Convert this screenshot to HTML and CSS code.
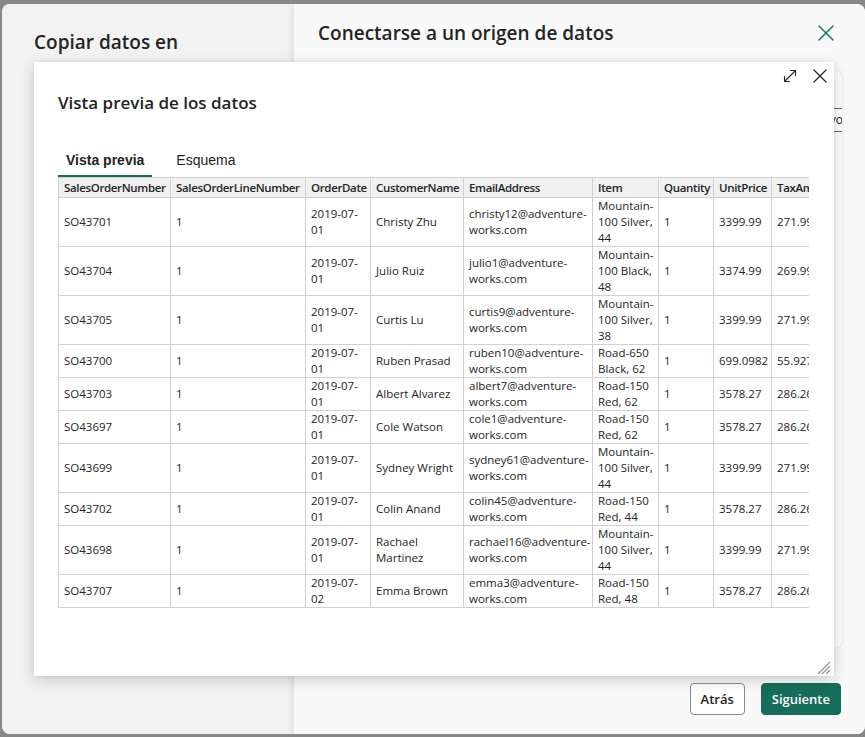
FILE: index.html
```html
<!DOCTYPE html>
<html lang="es">
<head>
<meta charset="utf-8">
<title>Vista previa de los datos</title>
<link rel="stylesheet" href="styles.css">
</head>
<body>
<div class="window">
  <aside class="left">
    <h1 class="left-title">Copiar datos en lakehouse</h1>
  </aside>
  <main class="right">
    <header class="right-head">
      <h2 class="right-title">Conectarse a un origen de datos</h2>
      <button class="icon-btn close-main" aria-label="Cerrar">
        <svg width="16" height="16" viewBox="0 0 16 16"><path d="M1 1 L15 15 M15 1 L1 15" stroke="currentColor" stroke-width="1.5" fill="none" stroke-linecap="round"/></svg>
      </button>
    </header>
    <section class="card">
      <div class="card-row"><span>Nombre del archivo</span></div>
    </section>
    <footer class="right-foot">
      <button class="btn">Atrás</button>
      <button class="btn primary">Siguiente</button>
    </footer>
  </main>
</div>

<div class="dialog" role="dialog">
  <div class="dialog-bar">
    <button class="icon-btn" aria-label="Expandir">
      <svg width="14" height="14" viewBox="0 0 14 14"><path d="M1.5 12.5 L12.5 1.5 M7.5 1.5 H12.5 V6.5 M1.5 7.5 V12.5 H6.5" stroke="#242424" stroke-width="1.1" fill="none" stroke-linecap="round" stroke-linejoin="round"/></svg>
    </button>
    <button class="icon-btn" aria-label="Cerrar">
      <svg width="14" height="14" viewBox="0 0 14 14"><path d="M1 1 L13 13 M13 1 L1 13" stroke="#242424" stroke-width="1.2" fill="none" stroke-linecap="round"/></svg>
    </button>
  </div>
  <h3 class="dialog-title">Vista previa de los datos</h3>
  <div class="tabs">
    <span class="tab active">Vista previa</span>
    <span class="tab">Esquema</span>
  </div>
  <div class="table-wrap">
    <table class="grid">
      <colgroup>
        <col class="c1"><col class="c2"><col class="c3"><col class="c4"><col class="c5"><col class="c6"><col class="c7"><col class="c8"><col class="c9"><col class="c10">
      </colgroup>
      <thead>
        <tr><th>SalesOrderNumber</th><th>SalesOrderLineNumber</th><th>OrderDate</th><th>CustomerName</th><th>EmailAddress</th><th>Item</th><th>Quantity</th><th>UnitPrice</th><th>TaxAmount</th><th>TotalAmount</th></tr>
      </thead>
      <tbody>
        <tr><td>SO43701</td><td>1</td><td>2019-07-<wbr>01</td><td>Christy Zhu</td><td>christy12@adventure-<wbr>works.com</td><td>Mountain-<wbr>100 Silver, 44</td><td>1</td><td>3399.99</td><td>271.99</td><td>3671.98</td></tr>
        <tr><td>SO43704</td><td>1</td><td>2019-07-<wbr>01</td><td>Julio Ruiz</td><td>julio1@adventure-<wbr>works.com</td><td>Mountain-<wbr>100 Black, 48</td><td>1</td><td>3374.99</td><td>269.99</td><td>3644.98</td></tr>
        <tr><td>SO43705</td><td>1</td><td>2019-07-<wbr>01</td><td>Curtis Lu</td><td>curtis9@adventure-<wbr>works.com</td><td>Mountain-<wbr>100 Silver, 38</td><td>1</td><td>3399.99</td><td>271.99</td><td>3671.98</td></tr>
        <tr><td>SO43700</td><td>1</td><td>2019-07-<wbr>01</td><td>Ruben Prasad</td><td>ruben10@adventure-<wbr>works.com</td><td>Road-650 Black, 62</td><td>1</td><td>699.0982</td><td>55.9279</td><td>755.0261</td></tr>
        <tr><td>SO43703</td><td>1</td><td>2019-07-<wbr>01</td><td>Albert Alvarez</td><td>albert7@adventure-<wbr>works.com</td><td>Road-150 Red, 62</td><td>1</td><td>3578.27</td><td>286.26</td><td>3864.53</td></tr>
        <tr><td>SO43697</td><td>1</td><td>2019-07-<wbr>01</td><td>Cole Watson</td><td>cole1@adventure-<wbr>works.com</td><td>Road-150 Red, 62</td><td>1</td><td>3578.27</td><td>286.26</td><td>3864.53</td></tr>
        <tr><td>SO43699</td><td>1</td><td>2019-07-<wbr>01</td><td>Sydney Wright</td><td>sydney61@adventure-<wbr>works.com</td><td>Mountain-<wbr>100 Silver, 44</td><td>1</td><td>3399.99</td><td>271.99</td><td>3671.98</td></tr>
        <tr><td>SO43702</td><td>1</td><td>2019-07-<wbr>01</td><td>Colin Anand</td><td>colin45@adventure-<wbr>works.com</td><td>Road-150 Red, 44</td><td>1</td><td>3578.27</td><td>286.26</td><td>3864.53</td></tr>
        <tr><td>SO43698</td><td>1</td><td>2019-07-<wbr>01</td><td>Rachael Martinez</td><td>rachael16@adventure-<wbr>works.com</td><td>Mountain-<wbr>100 Silver, 44</td><td>1</td><td>3399.99</td><td>271.99</td><td>3671.98</td></tr>
        <tr><td>SO43707</td><td>1</td><td>2019-07-<wbr>02</td><td>Emma Brown</td><td>emma3@adventure-<wbr>works.com</td><td>Road-150 Red, 48</td><td>1</td><td>3578.27</td><td>286.26</td><td>3864.53</td></tr>
      </tbody>
    </table>
  </div>
  <span class="grip" aria-hidden="true">
    <svg width="14" height="14" viewBox="0 0 14 14"><path d="M1 13 L13 1 M5 13 L13 5 M9 13 L13 9" stroke="#9a9a9a" stroke-width="1.4" fill="none"/></svg>
  </span>
</div>
</body>
</html>
```

FILE: styles.css
```css
* { box-sizing: border-box; }

html, body {
  margin: 0;
  padding: 0;
}

body {
  background: #878787;
  width: 865px;
  height: 737px;
  overflow: hidden;
  position: relative;
  font-family: "Segoe UI", "Open Sans", sans-serif;
  color: #242424;
  padding: 4px 0 0 2px;
}

.window {
  display: flex;
  width: 863px;
  height: 730px;
  border-radius: 8px;
  overflow: hidden;
  background: #f2f2f2;
}

.left {
  width: 292px;
  flex: none;
  background: #f2f2f2;
  padding: 24px 20px 0 32px;
}

.left-title {
  margin: 0;
  font-size: 19px;
  line-height: 28px;
  font-weight: 600;
  color: #242424;
}

.right {
  flex: 1;
  display: flex;
  flex-direction: column;
  background: #f9f9f9;
  box-shadow: -2px 0 6px rgba(0, 0, 0, 0.08);
  position: relative;
}

.right-head {
  height: 66px;
  flex: none;
  display: flex;
  align-items: flex-start;
  justify-content: space-between;
  padding: 15px 29px 0 24px;
}

.right-title {
  margin: 0;
  font-size: 19px;
  line-height: 28px;
  font-weight: 600;
}

.icon-btn {
  border: 0;
  background: transparent;
  padding: 0;
  width: 20px;
  height: 20px;
  display: flex;
  align-items: center;
  justify-content: center;
  cursor: pointer;
}

.close-main {
  color: #117865;
  margin-top: 4px;
}

.card {
  flex: 1;
  margin: 0 23px 0 24px;
  background: #ffffff;
  border-radius: 8px;
  box-shadow: 0 0 2px rgba(0, 0, 0, 0.14);
  overflow: hidden;
  padding-top: 38px;
}

.card-row {
  border-top: 1px solid #707070;
  border-bottom: 1px solid #707070;
  height: 24px;
  font-size: 12px;
  line-height: 22px;
  text-align: right;
  white-space: nowrap;
  overflow: hidden;
  margin-right: -1px;
}

.right-foot {
  flex: none;
  display: flex;
  justify-content: flex-end;
  gap: 16px;
  padding: 35px 24px 19px 0;
}

.btn {
  height: 32px;
  padding: 0 10px;
  border: 1px solid #8a8a8a;
  border-radius: 4px;
  background: #ffffff;
  font-family: "Segoe UI", "Open Sans", sans-serif;
  font-size: 13px;
  font-weight: 600;
  color: #242424;
}

.btn.primary {
  background: #176d5b;
  border-color: #176d5b;
  color: #ffffff;
}

/* Dialog */
.dialog {
  position: absolute;
  left: 34px;
  top: 62px;
  width: 800px;
  height: 614px;
  background: #ffffff;
  box-shadow: 0 4px 14px rgba(0, 0, 0, 0.18), 0 0 3px rgba(0, 0, 0, 0.08);
}

.dialog-bar {
  height: 28px;
  display: flex;
  justify-content: flex-end;
  align-items: center;
  gap: 10px;
  padding-right: 4px;
}

.dialog-title {
  margin: 0 0 0 24px;
  font-size: 17px;
  line-height: 26px;
  font-weight: 600;
}

.tabs {
  display: flex;
  margin: 34px 0 0 24px;
}

.tab {
  font-family: "Liberation Sans", Arial, sans-serif;
  font-size: 14px;
  line-height: 20px;
  padding: 0 8px 5px;
  margin-right: 16px;
  border-bottom: 2px solid transparent;
  color: #242424;
}

.tab.active {
  font-weight: 700;
  border-bottom-color: #1b6b5a;
}

.table-wrap {
  margin-left: 24px;
  width: 751px;
  overflow: hidden;
}

.grid {
  border-collapse: collapse;
  table-layout: fixed;
  width: 873px;
  font-size: 11.5px;
  color: #242424;
}

.c1 { width: 112px; }
.c2 { width: 135px; }
.c3 { width: 65px; }
.c4 { width: 93px; }
.c5 { width: 129px; }
.c6 { width: 66px; }
.c7 { width: 55px; }
.c8 { width: 58px; }
.c9 { width: 70px; }
.c10 { width: 90px; }

.grid th,
.grid td {
  border: 1px solid #d1d1d1;
  padding: 0 4px 0 5px;
  text-align: left;
  vertical-align: middle;
}

.grid th {
  background: #f0f0f0;
  font-weight: 600;
  letter-spacing: -0.35px;
  line-height: 19px;
  white-space: nowrap;
  overflow: hidden;
}

.grid td {
  line-height: 16px;
}

.grip {
  position: absolute;
  right: 3px;
  bottom: 4px;
  width: 14px;
  height: 14px;
}
```
